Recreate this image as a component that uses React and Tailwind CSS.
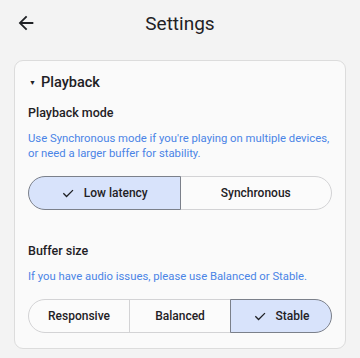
import React from "react";

function Check() {
  return (
    <svg width="14" height="14" viewBox="0 0 24 24" className="shrink-0">
      <path d="M4 12.5l5.5 5.5L20.5 7" fill="none" stroke="#1f2125" strokeWidth="2.2" />
    </svg>
  );
}

function Seg({ items, selected }) {
  return (
    <div className="flex h-[34px]">
      {items.map((it, i) => {
        const sel = i === selected;
        const first = i === 0;
        const last = i === items.length - 1;
        return (
          <div
            key={it}
            className={
              "flex-1 flex items-center justify-center gap-[9px] border text-[12px] font-medium text-[#1f2125] " +
              (first ? "rounded-l-full " : "-ml-px ") +
              (last ? "rounded-r-full " : "") +
              (sel ? "bg-[#d8e3fb] border-[#7b808a] z-10" : "bg-[#fbfbfb] border-[#d3d3d5]")
            }
          >
            {sel && <Check />}
            <span>{it}</span>
          </div>
        );
      })}
    </div>
  );
}

export default function App() {
  return (
    <div className="w-[360px] h-[358px] bg-[#f3f3f3] overflow-hidden" style={{ fontFamily: "Roboto, 'Noto Sans', sans-serif" }}>
      <div className="relative h-12 flex items-center justify-center">
        <svg className="absolute left-[15px] top-[12px]" width="22" height="22" viewBox="0 0 24 24">
          <path d="M20 11H7.83l5.59-5.59L12 4l-8 8 8 8 1.41-1.41L7.83 13H20v-2z" fill="#1f2125" />
        </svg>
        <span className="text-[19px] text-[#1f2125]">Settings</span>
      </div>
      <div className="mx-[14px] mt-3 rounded-[9px] border border-[#dcdcdc] bg-[#fafafa] px-[13px] pt-[10px] pb-[15px]">
        <div className="flex items-center h-6">
          <span className="text-[7px] text-[#1f2125] ml-[1px] w-[12px]">▼</span>
          <span className="text-[14.5px] font-medium text-[#1f2125]">Playback</span>
        </div>
        <div className="mt-2 text-[12.5px] leading-5 font-medium text-[#1f2125]">Playback mode</div>
        <div className="mt-2 text-[11.3px] leading-[15px] text-[#4a84e6]">
          Use Synchronous mode if you're playing on multiple devices, or need a larger buffer for stability.
        </div>
        <div className="mt-[15px]">
          <Seg items={["Low latency", "Synchronous"]} selected={0} />
        </div>
        <div className="mt-[31px] text-[12.5px] leading-5 font-medium text-[#1f2125]">Buffer size</div>
        <div className="mt-2 text-[11.3px] leading-[15px] text-[#4a84e6]">
          If you have audio issues, please use Balanced or Stable.
        </div>
        <div className="mt-[15px]">
          <Seg items={["Responsive", "Balanced", "Stable"]} selected={2} />
        </div>
      </div>
    </div>
  );
}
